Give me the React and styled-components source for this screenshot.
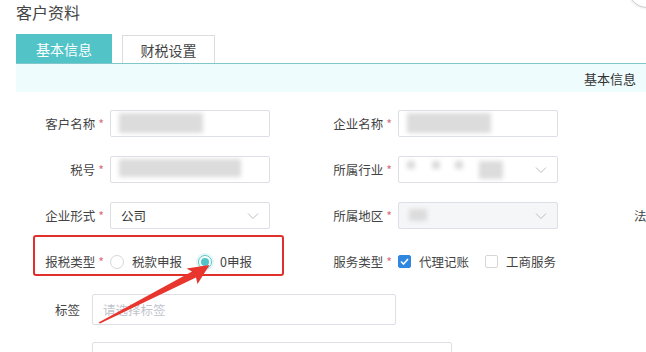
import React from 'react';
import styled, { createGlobalStyle } from 'styled-components';

const GlobalStyle = createGlobalStyle`
  html, body {
    margin: 0;
    padding: 0;
    background: #fff;
    overflow: hidden;
  }
  body {
    font-family: "Noto Sans CJK SC", "Noto Sans", sans-serif;
    color: #333;
  }
`;

const Page = styled.div`
  position: relative;
  width: 646px;
  height: 352px;
  overflow: hidden;
`;

const Title = styled.h1`
  margin: 0;
  padding: 1px 0 0 16px;
  height: 33px;
  font-size: 16px;
  font-weight: 400;
  line-height: 22px;
  color: #444;
`;

const Tabs = styled.div`
  display: flex;
  gap: 10px;
  padding-left: 16px;
  align-items: flex-end;
  height: 29px;
`;

const Tab = styled.div`
  width: ${(p) => (p.$active ? '96px' : '93px')};
  height: ${(p) => (p.$active ? '29px' : '28px')};
  box-sizing: border-box;
  display: flex;
  align-items: center;
  justify-content: center;
  font-size: 14px;
  color: ${(p) => (p.$active ? '#fff' : '#444')};
  background: ${(p) => (p.$active ? '#52c4c8' : '#fff')};
  border: ${(p) => (p.$active ? 'none' : '1px solid #dcdcdc')};
  border-bottom: none;
`;

const SectionBar = styled.div`
  margin-left: 16px;
  height: 28px;
  border-top: 1px solid #80c6cb;
  background: #effcfd;
  display: flex;
  align-items: center;
  justify-content: flex-end;
  padding-right: 10px;
  font-size: 13px;
  color: #333;
`;

const Form = styled.div`
  display: grid;
  grid-template-columns: 288px 288px 288px;
  row-gap: 19px;
  padding: 18px 0 0 24px;
`;

const Field = styled.div`
  display: flex;
  align-items: center;
  gap: 6px;
  height: 27px;
`;

const Label = styled.label`
  width: ${(p) => p.$width || 80}px;
  flex-shrink: 0;
  text-align: right;
  font-size: 12.5px;
  color: #444;
  white-space: nowrap;
`;

const Star = styled.span`
  color: #d9707a;
  margin-left: 3px;
`;

const Input = styled.div`
  position: relative;
  width: ${(p) => p.$width || 160}px;
  height: ${(p) => p.$height || 27}px;
  box-sizing: border-box;
  border: 1px solid #dcdfe6;
  border-radius: 2px;
  background: ${(p) => (p.$disabled ? '#f5f6f8' : '#fff')};
  display: flex;
  align-items: center;
  padding: 0 10px;
  font-size: 12.5px;
  color: #333;
  overflow: hidden;
`;

const Placeholder = styled.span`
  color: #c0c4cc;
`;

const Blur = styled.div`
  position: absolute;
  top: ${(p) => p.$top}px;
  left: ${(p) => p.$left}px;
  width: ${(p) => p.$w}px;
  height: ${(p) => p.$h}px;
  background: #dcdcdc;
  filter: blur(2px);
`;

const Chevron = styled.svg`
  position: absolute;
  right: 10px;
  top: 9px;
  width: 12px;
  height: 8px;
`;

const Choices = styled.div`
  display: flex;
  align-items: center;
  font-size: 12.5px;
  color: #444;
`;

const Radio = styled.span`
  width: 14px;
  height: 14px;
  box-sizing: border-box;
  border-radius: 50%;
  border: 1px solid ${(p) => (p.$checked ? '#52c4c8' : '#d6d6d6')};
  box-shadow: ${(p) => (p.$checked ? '0 0 0 2px #e3f6f7' : 'none')};
  display: inline-flex;
  align-items: center;
  justify-content: center;
  margin: 0 8px 0 ${(p) => p.$gap || 0}px;
  &::after {
    content: '';
    width: 8px;
    height: 8px;
    border-radius: 50%;
    background: ${(p) => (p.$checked ? '#52c4c8' : 'transparent')};
  }
`;

const Check = styled.span`
  width: 13px;
  height: 13px;
  box-sizing: border-box;
  border-radius: 2px;
  border: 1px solid ${(p) => (p.$checked ? '#2f87e0' : '#d6d6d6')};
  background: ${(p) => (p.$checked ? '#2f87e0' : '#fff')};
  display: inline-flex;
  align-items: center;
  justify-content: center;
  margin: 0 8px 0 ${(p) => p.$gap || 0}px;
`;

const WideRows = styled.div`
  display: flex;
  flex-direction: column;
  gap: 17px;
  padding: 19px 0 0 0;
`;

const WideField = styled.div`
  display: flex;
  align-items: center;
  gap: 12px;
`;

const Highlight = styled.div`
  position: absolute;
  left: 33px;
  top: 235px;
  width: 251px;
  height: 41px;
  box-sizing: border-box;
  border: 2.5px solid #e0302c;
  border-radius: 3px;
`;

const Arrow = styled.svg`
  position: absolute;
  left: 0;
  top: 0;
  width: 646px;
  height: 352px;
  pointer-events: none;
`;

const CornerArc = styled.div`
  position: absolute;
  right: -20px;
  top: -30px;
  width: 36px;
  height: 36px;
  border-radius: 50%;
  border: 1px solid #ccc;
  box-shadow: 0 0 3px rgba(0, 0, 0, 0.15);
`;

const ChevronIcon = () => (
  <Chevron viewBox="0 0 12 8">
    <path d="M1 1.5 L6 6.5 L11 1.5" fill="none" stroke="#b8bcc4" strokeWidth="1" />
  </Chevron>
);

const Req = ({ children }) => (
  <>
    {children}
    <Star>*</Star>
  </>
);

export default function App() {
  return (
    <Page>
      <GlobalStyle />
      <Title>客户资料</Title>
      <Tabs>
        <Tab $active>基本信息</Tab>
        <Tab>财税设置</Tab>
      </Tabs>
      <SectionBar>基本信息</SectionBar>

      <Form>
        <Field>
          <Label><Req>客户名称</Req></Label>
          <Input>
            <Blur $left={8} $top={2} $w={84} $h={20} />
          </Input>
        </Field>
        <Field>
          <Label><Req>企业名称</Req></Label>
          <Input>
            <Blur $left={8} $top={2} $w={84} $h={20} />
          </Input>
        </Field>
        <div />

        <Field>
          <Label><Req>税号</Req></Label>
          <Input>
            <Blur $left={8} $top={2} $w={122} $h={18} />
          </Input>
        </Field>
        <Field>
          <Label><Req>所属行业</Req></Label>
          <Input>
            <Blur $left={8} $top={4} $w={8} $h={8} />
            <Blur $left={33} $top={4} $w={8} $h={8} />
            <Blur $left={56} $top={4} $w={8} $h={8} />
            <Blur $left={80} $top={4} $w={24} $h={18} />
            <ChevronIcon />
          </Input>
        </Field>
        <div />

        <Field>
          <Label><Req>企业形式</Req></Label>
          <Input>
            公司
            <ChevronIcon />
          </Input>
        </Field>
        <Field>
          <Label><Req>所属地区</Req></Label>
          <Input $disabled>
            <Blur $left={10} $top={6} $w={18} $h={12} />
            <ChevronIcon />
          </Input>
        </Field>
        <Field>
          <Label $width={84}>法人代表</Label>
        </Field>

        <Field>
          <Label><Req>报税类型</Req></Label>
          <Choices>
            <Radio />
            税款申报
            <Radio $checked $gap={16} />
            0申报
          </Choices>
        </Field>
        <Field>
          <Label><Req>服务类型</Req></Label>
          <Choices>
            <Check $checked>
              <svg width="9" height="7" viewBox="0 0 9 7">
                <path d="M1 3.5 L3.5 6 L8 1" fill="none" stroke="#fff" strokeWidth="1.6" />
              </svg>
            </Check>
            代理记账
            <Check $gap={16} />
            工商服务
          </Choices>
        </Field>
        <div />
      </Form>

      <WideRows>
        <WideField>
          <Label>标签</Label>
          <Input $width={304} $height={31}>
            <Placeholder>请选择标签</Placeholder>
          </Input>
        </WideField>
        <WideField>
          <Label>经营地址</Label>
          <Input $width={360} $height={31}>
            <Placeholder>请输入经营地址</Placeholder>
          </Input>
        </WideField>
      </WideRows>

      <Highlight />
      <Arrow viewBox="0 0 646 352">
        <path
          d="M98.5 322.5 L192 271.5 L186.5 268.5 L209.5 265 L197.5 284 L196 277.5 L100 323.5 Z"
          fill="#e8352d"
        />
      </Arrow>
      <CornerArc />
    </Page>
  );
}
